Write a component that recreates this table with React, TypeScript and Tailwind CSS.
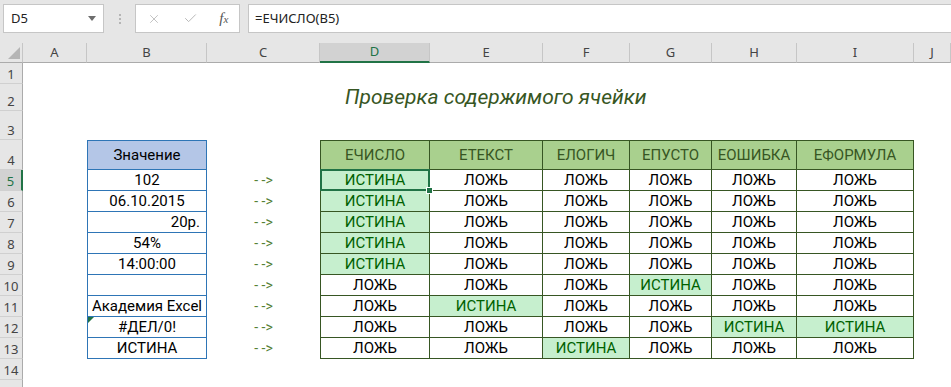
import { X, Check } from 'lucide-react';

const LETTERS = ['A', 'B', 'C', 'D', 'E', 'F', 'G', 'H', 'I', 'J'];
const FUNCS = ['ЕЧИСЛО', 'ЕТЕКСТ', 'ЕЛОГИЧ', 'ЕПУСТО', 'ЕОШИБКА', 'ЕФОРМУЛА'];

// each sample value and the functions that return TRUE for it
const SAMPLES = [
  { text: '102', hits: [0] },
  { text: '06.10.2015', hits: [0] },
  { text: '20р.', hits: [0], right: true },
  { text: '54%', hits: [0] },
  { text: '14:00:00', hits: [0] },
  { text: '', hits: [3] },
  { text: 'Академия Excel', hits: [1] },
  { text: '#ДЕЛ/0!', hits: [4, 5], error: true },
  { text: 'ИСТИНА', hits: [2] },
];

const FormulaBar = () => (
  <div className="h-[43px] bg-[#e6e6e6] flex items-start pt-[4px] pl-[3px] font-['Noto_Sans',sans-serif] text-[13px] text-[#222]">
    <div className="w-[101px] h-[29px] bg-white border border-[#c6c6c6] flex items-center justify-between pl-[7px] pr-[7px]">
      <span>D5</span>
      <svg width="8" height="5" viewBox="0 0 8 5">
        <path d="M0 0h8L4 5z" fill="#6d6d6d" />
      </svg>
    </div>
    <div className="w-[31px] h-[29px] flex flex-col items-center justify-center gap-[2px]">
      <span className="w-[2px] h-[2px] bg-[#b5b5b5]" />
      <span className="w-[2px] h-[2px] bg-[#b5b5b5]" />
      <span className="w-[2px] h-[2px] bg-[#b5b5b5]" />
    </div>
    <div className="w-[105px] h-[29px] bg-white border border-[#c6c6c6] flex items-center">
      <div className="w-[37px] flex justify-center">
        <X size={14} strokeWidth={1.3} color="#b0b0b0" />
      </div>
      <div className="w-[37px] flex justify-center">
        <Check size={15} strokeWidth={1.6} color="#b8b8b8" />
      </div>
      <div className="w-[31px] flex justify-center">
        <span className="italic font-['Liberation_Serif',serif] text-[15px] text-[#555] leading-none">
          f<span className="text-[11px]">x</span>
        </span>
      </div>
    </div>
    <div className="ml-[8px] flex-1 h-[29px] bg-white border border-r-0 border-[#c6c6c6] flex items-center pl-[6px]">
      =ЕЧИСЛО(B5)
    </div>
  </div>
);

const ColHead = ({ label }: { label: string }) => {
  const active = label === 'D';
  return (
    <div
      className={
        'flex items-center justify-center font-[\'Noto_Sans\',sans-serif] text-[13px] border-r border-[#c6c6c6] ' +
        (active
          ? 'bg-[#d2d2d2] text-[#217346] border-b-2 border-b-[#217346]'
          : 'bg-[#e6e6e6] text-[#444] border-b border-b-[#ababab]')
      }
    >
      {label}
    </div>
  );
};

const RowHead = ({ n }: { n: number }) => {
  const active = n === 5;
  return (
    <div
      className={
        'flex items-end justify-center pb-[2px] font-[\'Noto_Sans\',sans-serif] text-[13px] leading-none border-b border-[#d0d0d0] ' +
        (active
          ? 'bg-[#d2d2d2] text-[#217346] border-r-2 border-r-[#217346]'
          : 'bg-[#e6e6e6] text-[#444] border-r border-r-[#ababab]')
      }
    >
      {n}
    </div>
  );
};

const Empty = () => <div />;

const Row = ({ n }: { n: number }) => {
  if (n === 2) {
    return (
      <>
        <RowHead n={n} />
        <Empty />
        <Empty />
        <Empty />
        <div className="col-span-7 flex items-center pl-[25px] italic text-[21px] text-[#375623] whitespace-nowrap">
          Проверка содержимого ячейки
        </div>
      </>
    );
  }

  if (n === 4) {
    return (
      <>
        <RowHead n={n} />
        <Empty />
        <div className="flex items-center justify-center border border-[#2e75b6] bg-[#b4c6e7] text-[15px] text-black">
          Значение
        </div>
        <Empty />
        {FUNCS.map((f, i) => (
          <div
            key={f}
            className={
              'flex items-center justify-center border-t border-r border-b border-[#375623] bg-[#a9d08e] text-[15px] text-[#375623]' +
              (i === 0 ? ' border-l' : '')
            }
          >
            {f}
          </div>
        ))}
        <Empty />
      </>
    );
  }

  if (n >= 5 && n <= 13) {
    const s = SAMPLES[n - 5];
    return (
      <>
        <RowHead n={n} />
        <Empty />
        <div
          className={
            'relative flex items-center border-x border-b border-[#2e75b6] text-[15px] text-black whitespace-nowrap ' +
            (s.right ? 'justify-end pr-[6px]' : 'justify-center')
          }
        >
          {s.error && (
            <span className="absolute top-0 left-0 w-0 h-0 border-t-[6px] border-r-[6px] border-t-[#1e7145] border-r-transparent" />
          )}
          {s.text}
        </div>
        <div className="flex items-center justify-center text-[14px] text-[#548235] whitespace-pre">- -&gt;</div>
        {FUNCS.map((f, i) => {
          const hit = s.hits.includes(i);
          return (
            <div
              key={f}
              className={
                'relative flex items-center justify-center border-r border-b border-[#375623] text-[15px]' +
                (i === 0 ? ' border-l' : '') +
                (hit ? ' bg-[#c6efce] text-[#006100]' : ' text-black')
              }
            >
              {hit ? 'ИСТИНА' : 'ЛОЖЬ'}
              {n === 5 && i === 0 && (
                <>
                  <span className="absolute -inset-px border-2 border-[#217346] z-10" />
                  <span className="absolute -right-[4px] -bottom-[4px] w-[7px] h-[7px] bg-[#217346] border border-white z-20" />
                </>
              )}
            </div>
          );
        })}
        <Empty />
      </>
    );
  }

  return (
    <>
      <RowHead n={n} />
      {LETTERS.map((l) => (
        <Empty key={l} />
      ))}
    </>
  );
};

const Sheet = () => (
  <div className="grid grid-cols-[23px_64px_120px_113px_110px_113px_87px_82px_85px_117px_1fr] grid-rows-[20px_21px_27px_29px_30px_repeat(11,21px)]">
    <div className="flex items-end justify-end pr-[2px] pb-[3px] bg-[#e6e6e6] border-r border-b border-r-[#c6c6c6] border-b-[#ababab]">
      <svg width="12" height="12" viewBox="0 0 12 12">
        <polygon points="12,0 12,12 0,12" fill="#b5b5b5" />
      </svg>
    </div>
    {LETTERS.map((l) => (
      <ColHead key={l} label={l} />
    ))}
    {Array.from({ length: 15 }, (_, i) => i + 1).map((n) => (
      <Row key={n} n={n} />
    ))}
  </div>
);

export default function App() {
  return (
    <div className="w-[951px] h-[387px] overflow-hidden bg-white font-['Roboto',sans-serif]">
      <FormulaBar />
      <Sheet />
    </div>
  );
}
